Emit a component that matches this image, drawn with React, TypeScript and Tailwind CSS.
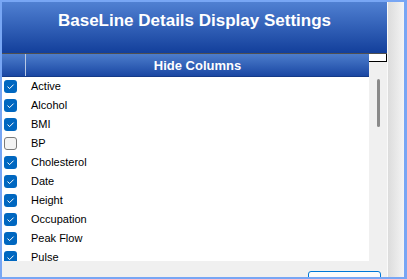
import React from 'react';

const columns = [
    { name: 'Active', checked: true },
    { name: 'Alcohol', checked: true },
    { name: 'BMI', checked: true },
    { name: 'BP', checked: false },
    { name: 'Cholesterol', checked: true },
    { name: 'Date', checked: true },
    { name: 'Height', checked: true },
    { name: 'Occupation', checked: true },
    { name: 'Peak Flow', checked: true },
    { name: 'Pulse', checked: true },
];

const CheckBox = ({ checked }: { checked: boolean }) =>
    checked ? (
        <div className="w-[13px] h-[13px] rounded-[3px] bg-[#0067c0] flex items-center justify-center flex-shrink-0">
            <svg width="13" height="13" viewBox="0 0 13 13">
                <path d="M3.5 6.6 L5.6 8.6 L9.6 4.6" fill="none" stroke="#ffffff" strokeWidth="1" />
            </svg>
        </div>
    ) : (
        <div className="w-[13px] h-[13px] rounded-[3px] bg-[#f3f3f3] border border-[#7a7a7a] flex-shrink-0" />
    );

export default function App() {
    return (
        <div
            className="w-[407px] h-[279px] bg-[#78a6f4] pt-[2px] pl-[2px] pb-[2px] pr-[3px] flex overflow-hidden"
            style={{ fontFamily: '"Liberation Sans", Arial, sans-serif' }}
        >
            {/* Main column */}
            <div className="w-[385px] h-full flex flex-col">
                {/* Title bar */}
                <div className="h-[51px] flex justify-center pt-[9px] bg-gradient-to-b from-[#5080d2] to-[#133f9b] flex-shrink-0">
                    <span className="text-white font-bold text-[17px] leading-[20px]">
                        BaseLine Details Display Settings
                    </span>
                </div>
                <div className="h-px bg-[#505050] flex-shrink-0" />

                {/* Grid */}
                <div className="flex-1 flex min-h-0">
                    <div className="w-[367px] flex flex-col min-h-0">
                        <div className="h-[23px] flex flex-shrink-0 border-b border-[#143a88]">
                            <div className="w-[23px] bg-gradient-to-b from-[#4d7dcc] to-[#1a47a3]" />
                            <div className="w-px bg-[#b8c8e4]" />
                            <div className="flex-1 flex items-center justify-center bg-gradient-to-b from-[#4d7dcc] to-[#1a47a3]">
                                <span className="text-white font-bold text-[13px] leading-none">Hide Columns</span>
                            </div>
                        </div>
                        <div className="flex-1 bg-white overflow-hidden">
                            {columns.map((c) => (
                                <div key={c.name} className="h-[19px] flex items-center pl-[2px]">
                                    <CheckBox checked={c.checked} />
                                    <span className="ml-[14px] text-[11px] leading-none text-black">{c.name}</span>
                                </div>
                            ))}
                        </div>
                    </div>

                    {/* Scrollbar */}
                    <div className="w-[18px] flex flex-col bg-[#f0f0f0]">
                        <div className="h-[8px] bg-white border-r border-b border-black flex-shrink-0" />
                        <div className="flex-1 relative">
                            <div className="absolute left-[8px] top-[17px] w-[3px] h-[48px] rounded-full bg-[#8a8a8a]" />
                        </div>
                    </div>
                </div>

                {/* Bottom band */}
                <div className="h-[16px] bg-[#f0f0f0] flex justify-end pr-[6px] pt-[10px] overflow-hidden flex-shrink-0">
                    <div className="w-[73px] h-[24px] rounded-[3px] border border-[#0078d7] bg-[#fbfbfb]" />
                </div>
            </div>

            {/* Right panel */}
            <div className="flex-1 h-full border-l border-[#fafafa] bg-gradient-to-r from-[#dcdcdc] to-[#f4f4f4]" />
        </div>
    );
}
